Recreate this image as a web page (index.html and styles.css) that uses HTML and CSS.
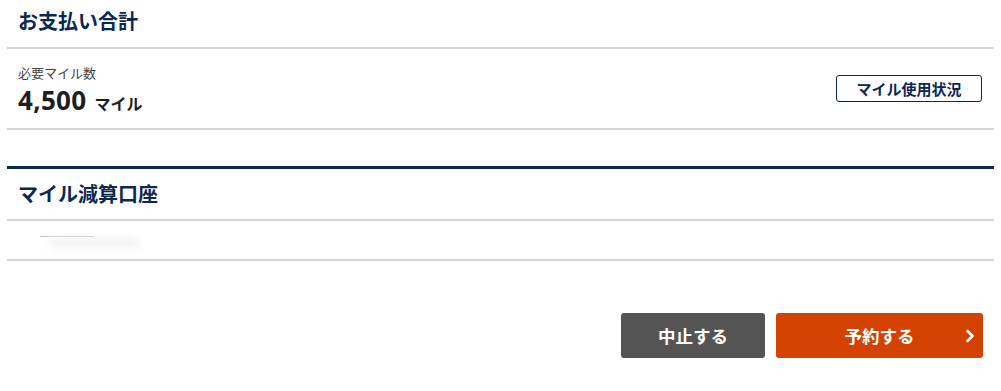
FILE: index.html
```html
<!DOCTYPE html>
<html lang="ja">
<head>
<meta charset="utf-8">
<title>お支払い合計</title>
<link rel="stylesheet" href="styles.css">
</head>
<body>
<div class="page">
  <section class="block">
    <div class="head first"><h2 class="title">お支払い合計</h2></div>
    <div class="row summary">
      <div class="miles">
        <div class="label">必要マイル数</div>
        <div class="value"><span class="num">4,500</span><span class="unit">マイル</span></div>
      </div>
      <button class="outline-btn" type="button">マイル使用状況</button>
    </div>
  </section>

  <section class="block account">
    <div class="head"><h2 class="title">マイル減算口座</h2></div>
    <div class="row blurred">
      <div class="blur-wrap"><span class="blur-line"></span><span class="blur-cloud"></span></div>
    </div>
  </section>

  <div class="actions">
    <button class="btn cancel" type="button">中止する</button>
    <button class="btn reserve" type="button">予約する<svg class="chev" width="10" height="14" viewBox="0 0 10 14"><polyline points="2.5,2 7.5,7 2.5,12" fill="none" stroke="#fff" stroke-width="2.6" stroke-linecap="round" stroke-linejoin="round"/></svg></button>
  </div>
</div>
</body>
</html>
```
FILE: styles.css
```css
* { box-sizing: border-box; }
body {
  margin: 0;
  background: #fff;
  font-family: "Noto Sans CJK JP", "Noto Sans", sans-serif;
  color: #222;
}
.page { padding: 0 7px; }
.head {
  display: flex;
  align-items: center;
  padding-left: 11px;
  border-bottom: 2px solid #d6d6d6;
}
.head.first { height: 49px; padding-bottom: 6px; }
.title {
  margin: 0;
  font-size: 20px;
  font-weight: 700;
  color: #0b2853;
  line-height: 1;
}
.row {
  display: flex;
  align-items: center;
  justify-content: space-between;
  border-bottom: 2px solid #d6d6d6;
}
.summary { height: 81px; padding: 0 12px 0 11px; }
.label {
  font-size: 13px;
  color: #444;
  line-height: 1;
  margin-top: 2px;
}
.value {
  display: flex;
  align-items: baseline;
  margin-top: 8px;
  line-height: 1;
}
.num {
  font-family: "Open Sans", "Noto Sans", sans-serif;
  font-size: 26px;
  font-weight: 700;
  color: #1e1e1e;
  letter-spacing: 0.3px;
}
.unit {
  font-size: 16px;
  font-weight: 700;
  margin-left: 8px;
  color: #1e1e1e;
}
.outline-btn {
  width: 146px;
  height: 27px;
  border: 1.5px solid #0b2853;
  border-radius: 3px;
  background: #fff;
  font-family: inherit;
  font-size: 15px;
  font-weight: 700;
  color: #0b2853;
  padding: 0;
  line-height: 1;
}
.account {
  margin-top: 36px;
  border-top: 3px solid #0b2853;
}
.account .head { height: 52px; }
.blurred { height: 40px; padding-left: 33px; }
.blur-wrap { position: relative; width: 100px; height: 20px; }
.blur-line {
  position: absolute;
  left: 0; top: 6px;
  width: 54px; height: 1px;
  background: #c9c9c9;
}
.blur-cloud {
  position: absolute;
  left: 10px; top: 9px;
  width: 88px; height: 8px;
  background: #f0f0f0;
  filter: blur(4px);
}
.actions {
  display: flex;
  justify-content: flex-end;
  gap: 11px;
  padding-right: 11px;
  margin-top: 52px;
}
.btn {
  height: 45px;
  border: none;
  border-radius: 3px;
  font-family: inherit;
  font-size: 17.5px;
  font-weight: 700;
  color: #fff;
  display: flex;
  align-items: center;
  justify-content: center;
  position: relative;
  padding: 0;
}
.cancel { width: 144px; background: #545454; }
.reserve { width: 207px; background: #d34200; }
.chev { position: absolute; right: 8px; top: 16px; }
```
